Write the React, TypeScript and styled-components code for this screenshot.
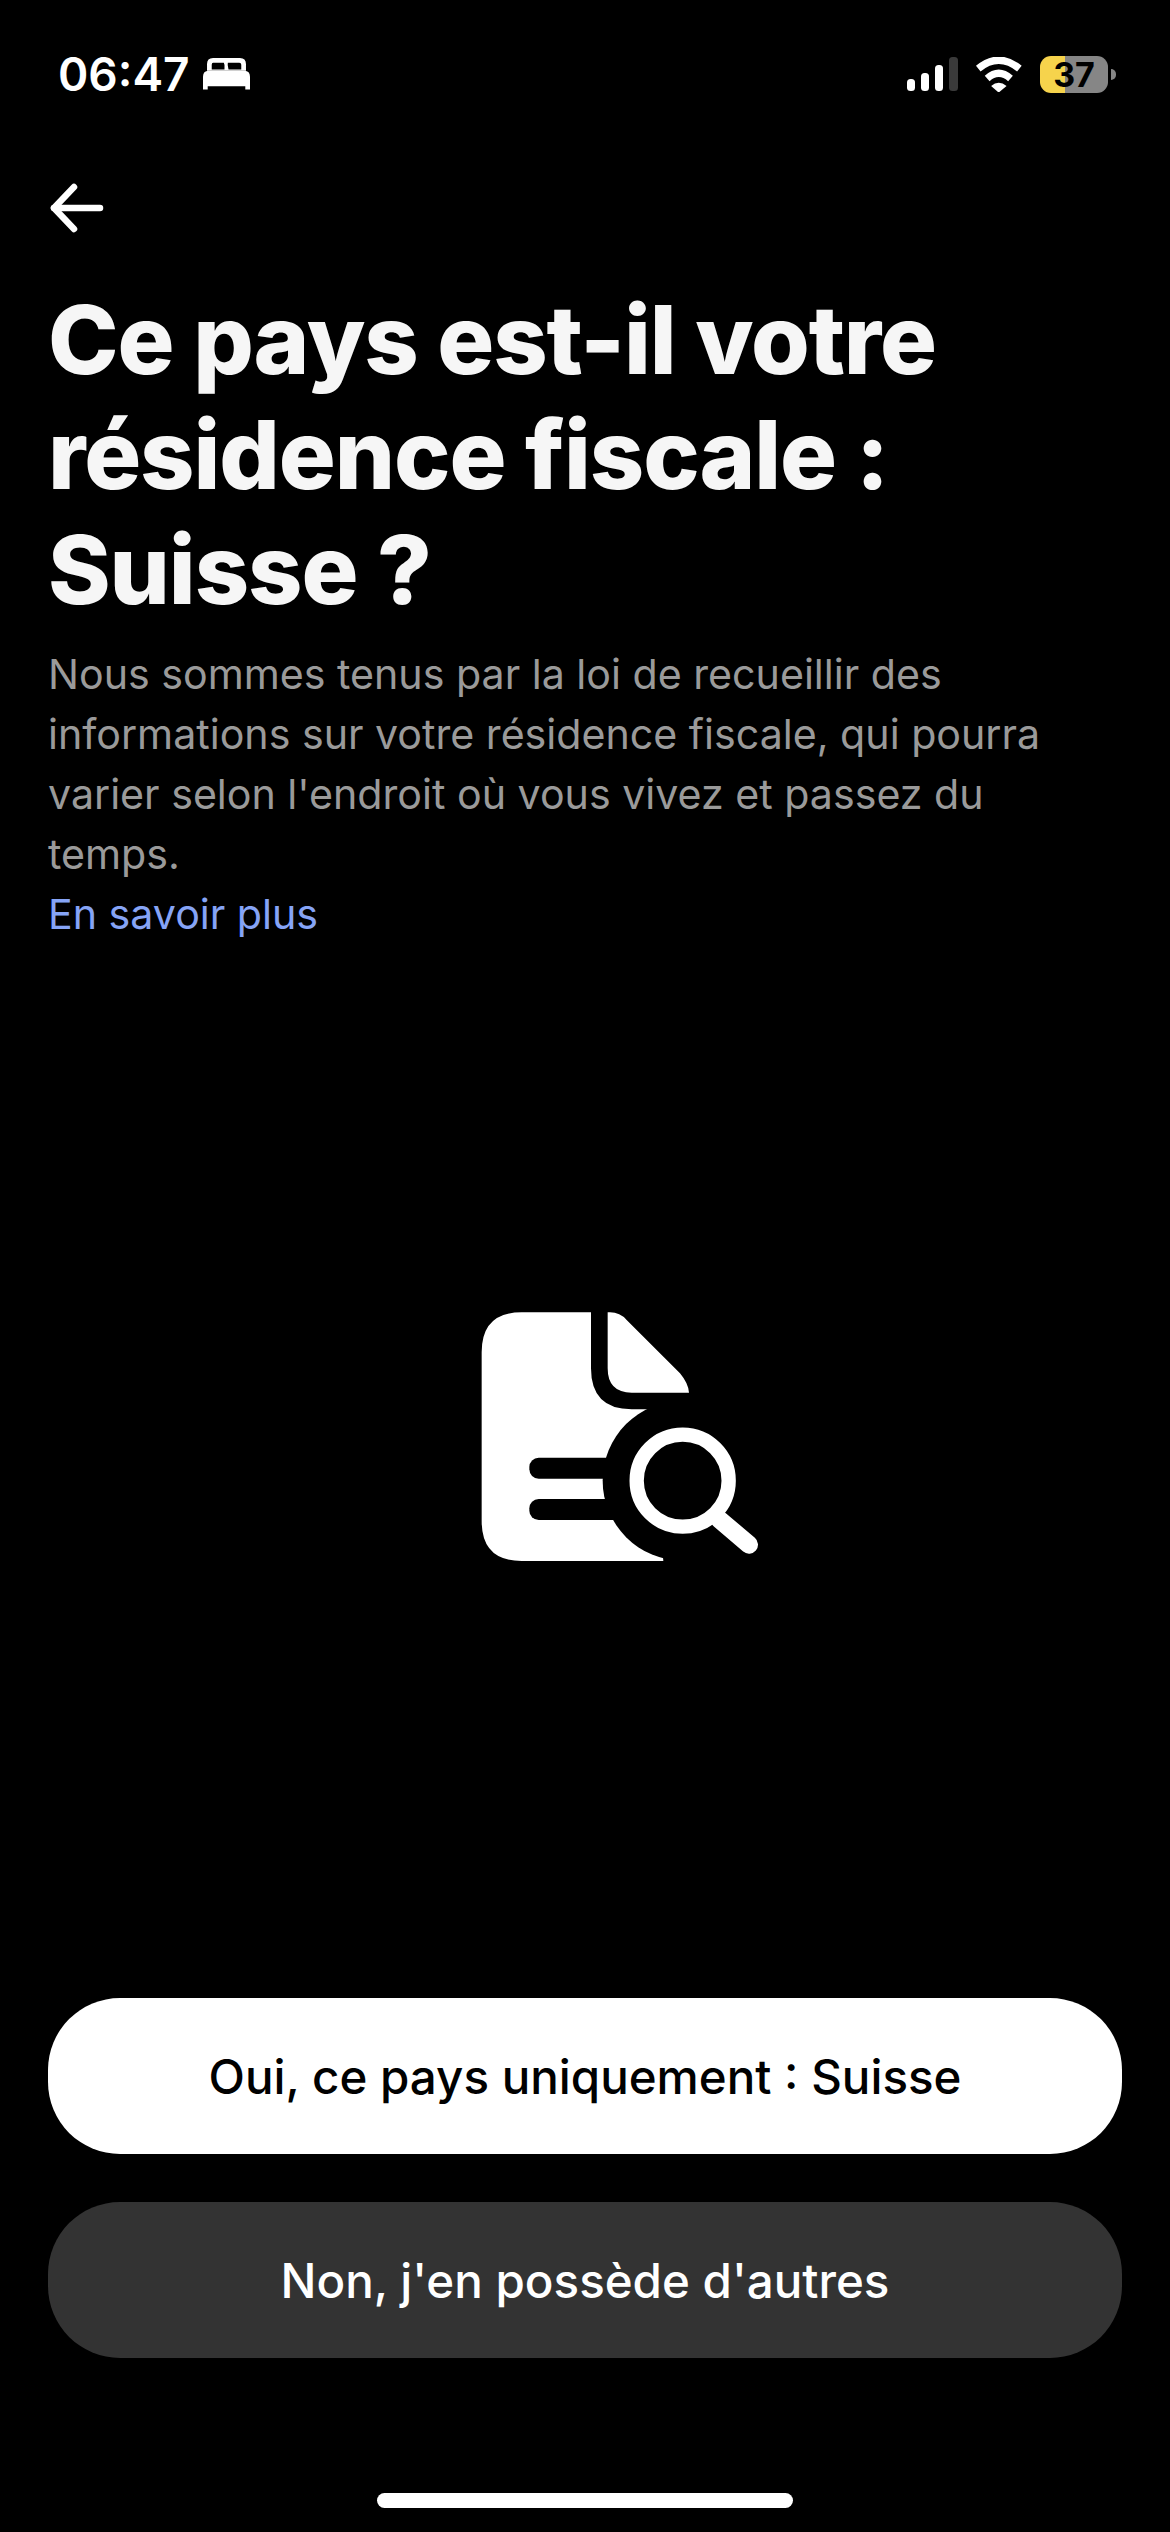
import React from "react";
import styled, { createGlobalStyle } from "styled-components";

const Global = createGlobalStyle`
  html, body { margin: 0; padding: 0; background: #000; }
  * { box-sizing: border-box; }
`;

const Page = styled.div`
  width: 1170px;
  height: 2532px;
  background: #000;
  display: flex;
  flex-direction: column;
  overflow: hidden;
  font-family: Inter, "Liberation Sans", sans-serif;
  color: #fff;
`;

const StatusBar = styled.div`
  display: flex;
  justify-content: space-between;
  align-items: center;
  height: 38px;
  margin-top: 55px;
  padding: 0 54px 0 58px;
`;

const TimeGroup = styled.div`
  display: flex;
  align-items: center;
  gap: 13px;
`;

const Time = styled.span`
  font-size: 46px;
  font-weight: 600;
  line-height: 38px;
`;

const Indicators = styled.div`
  display: flex;
  align-items: center;
  gap: 17px;
`;

const Battery = styled.div`
  display: flex;
  align-items: center;
`;

const BatteryBody = styled.div<{ $level: number }>`
  width: 68px;
  height: 37px;
  border-radius: 11px;
  background: linear-gradient(
    to right,
    #f6d34c ${(p) => p.$level}%,
    #868686 ${(p) => p.$level}%
  );
  color: #000;
  font-size: 34px;
  font-weight: 700;
  display: flex;
  align-items: center;
  justify-content: center;
  line-height: 37px;
`;

const BatteryNub = styled.div`
  width: 5px;
  height: 11px;
  margin-left: 3px;
  border-radius: 0 5px 5px 0;
  background: #868686;
`;

const BackButton = styled.button`
  align-self: flex-start;
  display: block;
  width: 60px;
  height: 50px;
  margin: 90px 0 0 48px;
  padding: 0;
  background: none;
  border: 0;
`;

const Content = styled.main`
  display: flex;
  flex-direction: column;
  padding: 0 48px;
`;

const Title = styled.h1`
  margin: 49px 0 0;
  font-size: 95px;
  line-height: 115px;
  font-weight: 800;
  letter-spacing: -1.1px;
  color: #f6f6f6;
`;

const Description = styled.p`
  margin: 17px 0 0;
  font-size: 41.15px;
  line-height: 60px;
  font-weight: 400;
  color: #9a9a9a;
`;

const LearnMore = styled.a`
  display: block;
  color: #86a4f6;
`;

const Illustration = styled.div`
  display: flex;
  justify-content: center;
  margin-top: 346px;
  padding-left: 60px;
`;

const Actions = styled.div`
  display: flex;
  flex-direction: column;
  gap: 48px;
  margin-top: auto;
  padding: 0 48px;
`;

const ActionButton = styled.button<{ $primary?: boolean }>`
  height: 156px;
  border: 0;
  border-radius: 72px;
  font-family: inherit;
  font-size: 47.5px;
  font-weight: 500;
  background: ${(p) => (p.$primary ? "#fff" : "#333333")};
  color: ${(p) => (p.$primary ? "#000" : "#fff")};
`;

const HomeBarArea = styled.div`
  display: flex;
  justify-content: center;
  padding: 135px 0 24px;
`;

const HomeBar = styled.div`
  width: 416px;
  height: 15px;
  border-radius: 8px;
  background: #fff;
`;

const BedIcon = () => (
  <svg width="47" height="32" viewBox="610 178 140 95" fill="#fff">
    <path
      fillRule="evenodd"
      d="M640 178H720Q738 178 738 196V216H622V196Q622 178 640 178ZM640 192Q636 192 636 198V212H674Q676 198 672 192ZM684 192Q682 198 686 212H724V198Q724 192 718 192Z"
    />
    <path d="M624 216H736Q750 218 750 234V272H736V262H624V272H610V234Q610 218 624 216Z" />
  </svg>
);

const SignalIcon = () => (
  <svg width="51" height="35" viewBox="0 0 51 35">
    <rect x="0" y="22" width="8" height="12" rx="3.5" fill="#fff" />
    <rect x="14" y="16" width="8" height="18" rx="3.5" fill="#fff" />
    <rect x="28" y="8" width="8" height="26" rx="3.5" fill="#fff" />
    <rect x="42" y="0" width="9" height="34" rx="3.5" fill="#3a3a3a" />
  </svg>
);

const WifiIcon = () => (
  <svg width="48" height="35" viewBox="345 78 146 106" fill="none" stroke="#fff">
    <path d="M355 113Q417 62 480 113" strokeWidth="22" />
    <path d="M382 143Q417 112 453 143" strokeWidth="22" />
    <path d="M394 166Q417 146 441 166L417 186Z" fill="#fff" stroke="none" />
  </svg>
);

const ArrowIcon = () => (
  <svg width="60" height="50" viewBox="0 0 60 50" fill="none" stroke="#fff" strokeWidth="6.5" strokeLinecap="round" strokeLinejoin="round">
    <path d="M52 25H6" />
    <path d="M26 4L6 25L26 46" />
  </svg>
);

const DocumentSearchIcon = () => (
  <svg width="330" height="290" viewBox="0 0 990 870">
    <path
      fill="#fff"
      d="M215 67H423V235Q423 358 545 358H600L640 813H215Q95 813 95 693V187Q95 67 215 67Z"
    />
    <path
      fill="#fff"
      d="M473 67H480Q510 67 530 90L690 250Q715 280 717 308H545Q473 308 473 235Z"
    />
    <rect x="238" y="503" width="280" height="63" rx="28" fill="#000" />
    <rect x="238" y="627" width="280" height="63" rx="28" fill="#000" />
    <circle cx="698" cy="572" r="240" fill="#000" />
    <circle cx="698" cy="572" r="138" fill="none" stroke="#fff" strokeWidth="43" />
    <path d="M810 690L897 764" stroke="#fff" strokeWidth="54" strokeLinecap="round" />
  </svg>
);

export default function App() {
  return (
    <Page>
      <Global />
      <StatusBar>
        <TimeGroup>
          <Time>06:47</Time>
          <BedIcon />
        </TimeGroup>
        <Indicators>
          <SignalIcon />
          <WifiIcon />
          <Battery>
            <BatteryBody $level={37}>37</BatteryBody>
            <BatteryNub />
          </Battery>
        </Indicators>
      </StatusBar>
      <BackButton aria-label="Retour">
        <ArrowIcon />
      </BackButton>
      <Content>
        <Title>
          Ce pays est-il votre
          <br />
          résidence fiscale :
          <br />
          Suisse ?
        </Title>
        <Description>
          Nous sommes tenus par la loi de recueillir des
          <br />
          informations sur votre résidence fiscale, qui pourra
          <br />
          varier selon l'endroit où vous vivez et passez du
          <br />
          temps.
          <LearnMore>En savoir plus</LearnMore>
        </Description>
      </Content>
      <Illustration>
        <DocumentSearchIcon />
      </Illustration>
      <Actions>
        <ActionButton $primary>Oui, ce pays uniquement : Suisse</ActionButton>
        <ActionButton>Non, j'en possède d'autres</ActionButton>
      </Actions>
      <HomeBarArea>
        <HomeBar />
      </HomeBarArea>
    </Page>
  );
}
